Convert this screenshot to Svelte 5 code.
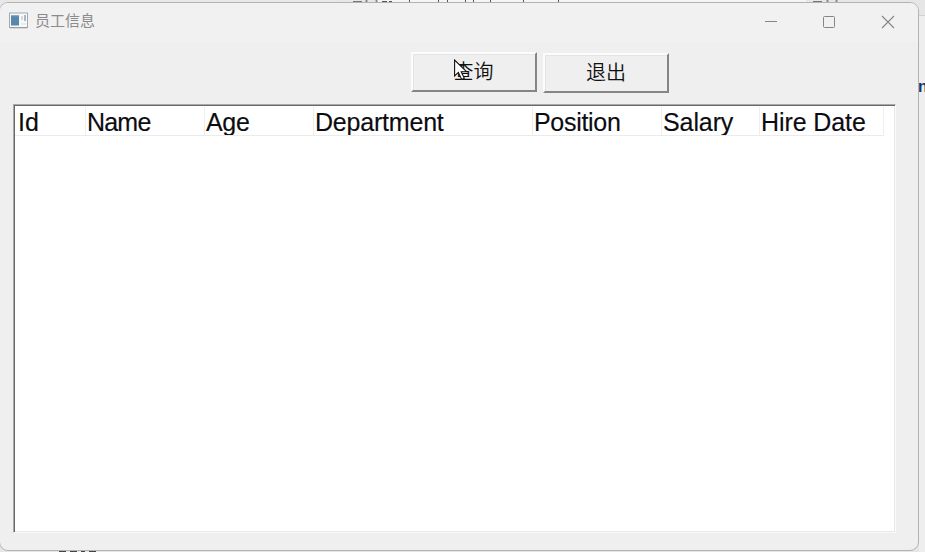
<script>
  const columns = [
    { label: 'Id', width: 71, tracking: 0 },
    { label: 'Name', width: 119, tracking: -0.8 },
    { label: 'Age', width: 109, tracking: -0.3 },
    { label: 'Department', width: 219, tracking: -0.2 },
    { label: 'Position', width: 129, tracking: -0.3 },
    { label: 'Salary', width: 98, tracking: -0.1 },
    { label: 'Hire Date', width: 124, tracking: -0.1 }
  ];
</script>

<div class="desktop">
  <svg class="behind" width="925" height="552" viewBox="0 0 925 552">
    <rect width="925" height="552" fill="#e6e6e6" />
    <rect width="340" height="4" fill="#e8e8e8" />
    <rect x="375" width="431" height="4" fill="#f5f5f5" />
    <rect x="919" y="16" width="6" height="536" fill="#eeeeee" />
    <path d="M919 15.500h6" stroke="#d2d2d2" />
    <path d="M353 1.500h9M813 1.500h9" stroke="#777" />
    <path d="M366.500 0v3M376.500 0v3M827.500 0v3M836.500 0v3" stroke="#888" stroke-width="2" />
    <path d="M382 1.500h5M389 1.500h3M409.500 0v3M438.500 0v3M447.500 0v3M465.500 0v3M473.500 0v3M490.500 0v3M523.500 0v3M558.500 0v3" stroke="#555" />
    <path d="M398 2.500h8M416 2.500h12M479 2.500h8M496 2.500h22M529 2.500h25" stroke="#999" stroke-dasharray="4 3" />
    <path d="M59 551h7M70 551h7M81 551h4M89 551h7" stroke="#444" stroke-width="2" />
  </svg>
  <span class="stray">n</span>

  <div class="window">
    <header>
      <svg class="appicon" width="19" height="17" viewBox="0 0 19 17">
        <rect x=".5" y="1" width="18" height="14.500" fill="#f8f8f8" stroke="#a4a8ac" />
        <path d="M1 15.800h17" stroke="#999" />
        <rect x="2" y="3.500" width="8" height="10" fill="#5489ad" />
        <path d="M2 4h8" stroke="#7194a9" />
        <rect x="12" y="4" width="2" height="4" fill="#d7dadd" />
        <rect x="15" y="3" width="2" height="6" fill="#a8b8c5" />
        <rect x="12" y="11" width="5" height="2" fill="#e8eaec" />
      </svg>
      <span class="title">员工信息</span>
      <svg class="controls" width="132" height="16" viewBox="0 0 132 16" fill="none" stroke="#858585">
        <path d="M1 7.500h12" />
        <rect x="59.500" y="2.500" width="11" height="11" rx="1" />
        <path d="M118 2l12 12M130 2l-12 12" stroke-width="1.100" />
      </svg>
    </header>

    <div class="toolbar">
      <button class="query">查询</button>
      <button class="exit">退出</button>
    </div>

    <main class="list">
      <div class="head">
        {#each columns as column}
          <div class="cell" style:width="{column.width}px" style:letter-spacing="{column.tracking}px">{column.label}</div>
        {/each}
      </div>
    </main>
  </div>

  <svg class="cursor" width="14" height="22" viewBox="0 0 14 22">
    <path d="M.6 1v16l3.800-3.600 3.200 7 2.700-1.200-3.100-6.500h5.300z" fill="#fff" stroke="#111" stroke-width="1.100" />
  </svg>
</div>

<style>
  .desktop {
    position: relative;
    width: 925px;
    height: 552px;
    overflow: hidden;
    font-family: "Liberation Sans", "Noto Sans CJK SC", sans-serif;
  }
  .behind {
    position: absolute;
    top: 0;
    left: 0;
  }
  .stray {
    position: absolute;
    left: 918px;
    top: 78px;
    font-size: 16px;
    line-height: 18px;
    font-weight: bold;
    color: #123468;
  }
  .window {
    position: absolute;
    left: -1px;
    top: 2px;
    box-sizing: border-box;
    width: 920px;
    height: 549px;
    border: 1px solid #b3b3b3;
    border-radius: 9px;
    background: #efefef;
    overflow: hidden;
  }
  header {
    display: flex;
    align-items: flex-start;
    height: 39px;
    padding-left: 9px;
    background: #f1f1f1;
  }
  .appicon {
    margin-top: 9px;
  }
  .title {
    margin: 6px 0 0 7px;
    font-family: "Noto Sans CJK SC", sans-serif;
    font-size: 15px;
    line-height: 22px;
    font-weight: 400;
    color: #8c8c8c;
  }
  .controls {
    margin: 11px 22px 0 auto;
  }
  .toolbar {
    display: flex;
    gap: 7px;
    height: 62px;
    padding: 10px 0 0 411px;
    box-sizing: border-box;
  }
  button {
    box-sizing: border-box;
    width: 126px;
    height: 40px;
    padding: 0 0 2px;
    border: 2px solid;
    border-color: #fcfcfc #858585 #858585 #fcfcfc;
    background: #efefef;
    box-shadow: inset 1px 1px #e4e4e4;
    font-family: "Noto Sans CJK SC", sans-serif;
    font-size: 20px;
    font-weight: 350;
    line-height: 34px;
    color: #111;
  }
  .query {
    margin-right: -1px;
    padding-right: 1px;
  }
  .exit {
    margin-top: 1px;
  }
  .list {
    box-sizing: border-box;
    width: 883px;
    height: 429px;
    margin-left: 13px;
    border: 1px solid;
    border-color: #a8a8a8 #fafafa #fafafa #a8a8a8;
    background: #fff;
    box-shadow: inset 1px 1px #696969, inset -1px -1px #e8e8e8;
  }
  .head {
    display: flex;
    width: 869px;
    height: 28px;
    margin: 2px 0 0 1px;
    border-bottom: 1px solid #ebebeb;
  }
  .cell {
    box-sizing: border-box;
    flex: none;
    height: 28px;
    padding-left: 1px;
    border-right: 1px solid #eeeeee;
    overflow: hidden;
    white-space: nowrap;
    font-size: 25px;
    line-height: 28px;
    padding-top: 1px;
    color: #0c0c10;
    -webkit-text-stroke: 0.15px #0c0c10;
  }
  .cell:first-child {
    padding-left: 3px;
  }
  .cursor {
    position: absolute;
    left: 454px;
    top: 59px;
  }
</style>
